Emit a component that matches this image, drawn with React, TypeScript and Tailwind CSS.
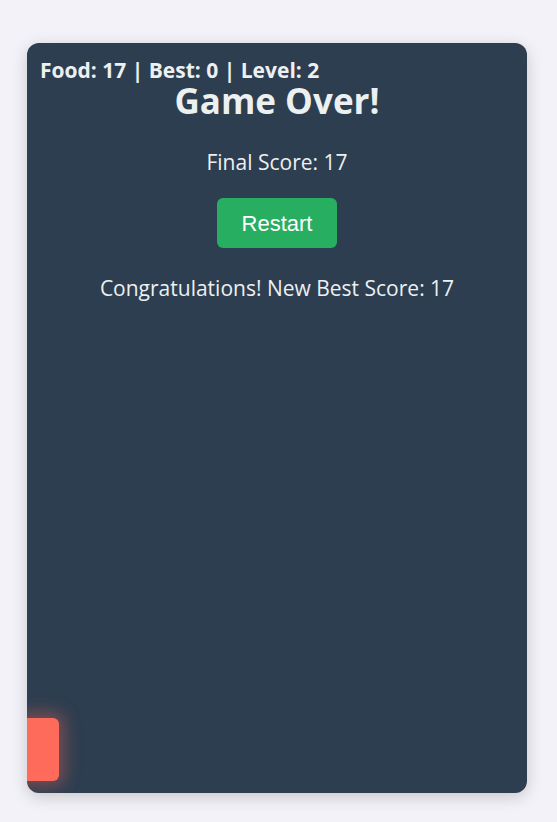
import React from "react";

export default function App() {
  return (
    <div className="min-h-[822px] w-full bg-[#f3f2f8] pl-[27px] pt-[43px] pb-[29px]" style={{ fontFamily: '"Open Sans", "Noto Sans", sans-serif' }}>
      <div className="relative h-[750px] w-[500px] overflow-hidden rounded-xl bg-[#2d3e50] text-[#ecf0f1] shadow-[0_4px_16px_rgba(0,0,0,0.18)]">
        <div className="absolute left-[13px] top-[16px] text-[21px] font-bold leading-[22px]">
          Food: 17 | Best: 0 | Level: 2
        </div>
        <div className="flex flex-col items-center pt-[39px]">
          <h1 className="text-[35px] font-bold leading-[38px]">Game Over!</h1>
          <p className="mt-[28px] text-[21px] leading-[28px]">Final Score: 17</p>
          <button
            className="mt-[22px] h-[50px] rounded-md bg-[#27ae60] px-[25px] text-[22px] text-white"
            style={{ fontFamily: '"Liberation Sans", Arial, sans-serif' }}
          >
            Restart
          </button>
          <p className="mt-[26px] text-[21px] leading-[28px]">Congratulations! New Best Score: 17</p>
        </div>
        <div className="absolute left-[-8px] top-[675px] h-[63px] w-[40px] rounded-md bg-[#ff6b5b] shadow-[0_0_16px_6px_rgba(255,107,91,0.35)]" />
      </div>
    </div>
  );
}
